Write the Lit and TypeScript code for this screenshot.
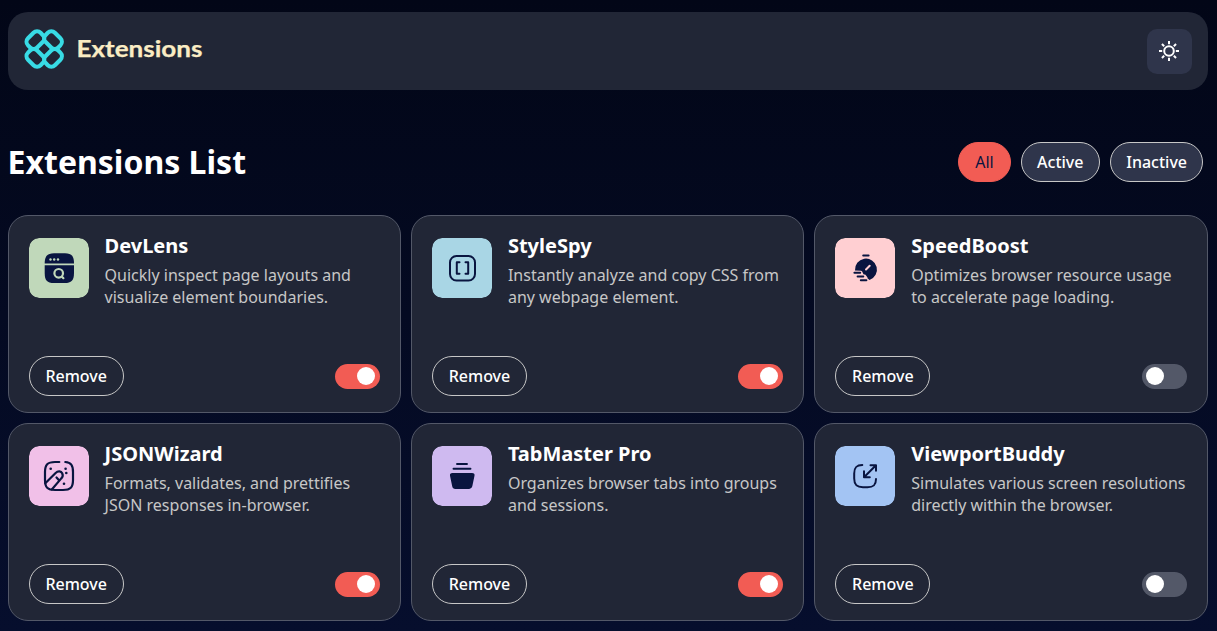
import { LitElement, html, css, svg } from "lit";
import { customElement, state } from "lit/decorators.js";
import { classMap } from "lit/directives/class-map.js";

const NAVY = "#091540";

const icons: Record<string, unknown> = {
  lens: svg`
    <path fill=${NAVY} d="M15.7 25.5C15.7 18 18.5 15.3 25 15.3H36C42.500 15.3 45 18 45 25.500Z"/>
    <path fill=${NAVY} d="M15.7 27.300H45V35C45 42.500 42.500 45 35.500 45H25C18 45 15.700 42.500 15.700 35Z"/>
    <g fill="#c0d8ba"><circle cx="21.500" cy="21.500" r="1.200"/><circle cx="25.200" cy="21.500" r="1.200"/><circle cx="29" cy="21.500" r="1.200"/></g>
    <g fill="none" stroke="#c0d8ba" stroke-width="2.200" stroke-linecap="round"><circle cx="29.700" cy="35.300" r="4.300"/><path d="M33 38.700L34.400 40.200"/></g>`,
  brackets: svg`<g fill="none" stroke=${NAVY} stroke-width="2" stroke-linecap="round" stroke-linejoin="round">
    <rect x="18" y="18" width="25" height="24.500" rx="6.500"/>
    <path d="M27.500 24.200H24.800V35.800H27.500M33.500 24.200H36.200V35.800H33.500"/></g>`,
  speed: svg`
    <path fill=${NAVY} d="M20 32.500A11 11 0 1 1 34.500 42L32.500 40.300V39.500L30.500 36.800L28.500 36.300L27 33.200L26 32.700Z"/>
    <g fill="none" stroke-linecap="round"><path stroke=${NAVY} stroke-width="2" d="M28.200 17.400H33.600M19.400 34.800H25.200M22.600 38.500H28.300M25.800 42.300H31.400"/>
    <path stroke="#ffcfd2" stroke-width="2" d="M31 31.500L34.700 27.700"/></g>`,
  wizard: svg`<g fill="none" stroke=${NAVY} stroke-width="2.200" stroke-linecap="round" stroke-linejoin="round">
    <path d="M30.300 16H26C18.500 16 16 18.500 16 26V34C16 41.500 18.500 44 26 44H34C41.500 44 44 41.500 44 34V26C44 19 42 16.500 36.300 16"/>
    <path d="M16.300 37.300L26.600 27C29.200 24.400 32.200 25.300 33.200 27.200C34.100 29 33.900 30.800 32.300 32.400L22.800 43.500M27.500 31.500L29.600 33.800"/></g>
    <g fill=${NAVY}><circle cx="21.700" cy="22.700" r="1.300"/><circle cx="36.600" cy="22.700" r="1.300"/><circle cx="37.300" cy="27" r="1.300"/><circle cx="35" cy="37.700" r="1.300"/></g>`,
  tabs: svg`<path stroke=${NAVY} stroke-width="1.900" stroke-linecap="round" d="M25 18H35M21.500 22.700H38.500"/>
    <path fill=${NAVY} d="M20.500 27H40Q43 27 42.500 29.700L40.300 40.300Q39.700 43 37.200 43H23.300Q20.700 43 20.200 40.300L18 29.700Q17.500 27 20.500 27Z"/>`,
  viewport: svg`<path fill="none" stroke=${NAVY} stroke-width="2" stroke-linecap="round" stroke-linejoin="round"
    d="M27.300 19C21.500 19 19.200 21.300 19.200 27.500V32.500C19.200 39 21.700 41.200 28 41.200H32.500C38.700 41.200 41 39 41 33M29 31.200L41 19.200M29 25.200V31.200H34.800M35.500 19.200H41V24.800"/>`,
};

interface Extension { name: string; text: string; icon: string; color: string; on: boolean }

@customElement("app-root")
export class AppRoot extends LitElement {
  @state() filter = "All";
  @state() items: Extension[] = [
    { name: "DevLens", text: "Quickly inspect page layouts and visualize element boundaries.", icon: "lens", color: "#c0d8ba", on: true },
    { name: "StyleSpy", text: "Instantly analyze and copy CSS from any webpage element.", icon: "brackets", color: "#a9d6e5", on: true },
    { name: "SpeedBoost", text: "Optimizes browser resource usage to accelerate page loading.", icon: "speed", color: "#ffcfd2", on: false },
    { name: "JSONWizard", text: "Formats, validates, and prettifies JSON responses in-browser.", icon: "wizard", color: "#f1c0e8", on: true },
    { name: "TabMaster Pro", text: "Organizes browser tabs into groups and sessions.", icon: "tabs", color: "#cfbaf0", on: true },
    { name: "ViewportBuddy", text: "Simulates various screen resolutions directly within the browser.", icon: "viewport", color: "#a3c4f3", on: false },
  ];

  static styles = css`
    :host { display: block; box-sizing: border-box; height: 631px; overflow: hidden; padding: 12px 9.400px 10px 7.600px;
      background: linear-gradient(180deg, #020617 0%, #060e2d 100%);
      font-family: "Noto Sans", sans-serif; font-size: 16px; color: #fff; }
    * { box-sizing: border-box; }
    .bar { display: flex; justify-content: space-between; align-items: center; height: 78px; padding: 0 16px 0 15px;
      background: #212636; border-radius: 20px; }
    .logo { display: block; margin-bottom: 5px; }
    .wordmark { font: 700 23.500px Lato, sans-serif; fill: #faecc4; stroke: #faecc4; stroke-width: 0.25px; }
    .theme { display: grid; place-items: center; width: 45px; height: 45px; padding: 0 1px 0 0; border: 0; border-radius: 10px; background: #2f354b; }
    .heading { display: flex; justify-content: space-between; align-items: center; height: 40px; margin: 52px 0 33px; padding-right: 4.200px; }
    h1 { margin: 0; font-size: 32px; line-height: 40px; font-weight: 700; }
    .filters { display: flex; gap: 10px; }
    .pill { height: 40px; padding: 0 15.400px; border: 1px solid #c7c7c7; border-radius: 20px; background: #2f354b; color: #fff;
      font: 500 16px/22px "Noto Sans", sans-serif; }
    .pill.current { padding: 0 16px; background: #f25c54; border-color: #f25c54; color: #091540; font-weight: 400; }
    .pill.plain { padding: 0 15.800px; background: transparent; }
    .grid { display: grid; grid-template-columns: repeat(3, 1fr); gap: 10px; }
    .card { display: flex; flex-direction: column; justify-content: space-between; height: 198px; padding: 16px 20px;
      border: 1px solid #535868; border-radius: 20px; background: #212636; }
    .info { display: flex; gap: 16px; }
    .tile { flex: none; width: 60px; height: 60px; margin-top: 6px; border-radius: 10px; }
    h2 { margin: 0; font-size: 20px; line-height: 27px; font-weight: 700; }
    p { margin: 5px 0 0; line-height: 22px; color: #c7c7c7; }
    .actions { display: flex; justify-content: space-between; align-items: center; }
    .switch { width: 45px; height: 25px; padding: 3.500px 4px; border: 0; border-radius: 13px; background: #535868; display: flex; align-items: center; }
    .switch.on { background: #f25c54; justify-content: flex-end; padding-right: 5px; }
    .knob { width: 18px; height: 18px; border-radius: 50%; background: #fff; }
  `;

  toggle(item: Extension) {
    this.items = this.items.map((i) => (i === item ? { ...i, on: !i.on } : i));
  }

  render() {
    const shown = this.items.filter((i) => this.filter === "All" || i.on === (this.filter === "Active"));
    return html`
      <header class="bar">
        <svg class="logo" width="190" height="42" viewBox="0 0 190 42">
          <g transform="translate(21.200 21)" fill="none" stroke="#38dbe5" stroke-width="4.100">
            ${[45, 135, 225, 315].map((a) => svg`<rect x="-8.900" y="-19" width="17.800" height="13" rx="5" transform="rotate(${a})"/>`)}
          </g>
          <text class="wordmark" x="53.500" y="29.200" textLength="126" lengthAdjust="spacingAndGlyphs">Extensions</text>
        </svg>
        <button class="theme" aria-label="Toggle theme">
          <svg width="22" height="22" viewBox="-11 -11 22 22" fill="none" stroke="#fff" stroke-width="2">
            <circle r="4.800"/>
            ${[0, 45, 90, 135, 180, 225, 270, 315].map((a) => svg`<path d="M0-6.800V-10" transform="rotate(${a})"/>`)}
          </svg>
        </button>
      </header>
      <section class="heading">
        <h1>Extensions List</h1>
        <div class="filters">
          ${["All", "Active", "Inactive"].map((f) => html`<button class=${classMap({ pill: true, current: f === this.filter })} @click=${() => (this.filter = f)}>${f}</button>`)}
        </div>
      </section>
      <main class="grid">
        ${shown.map((i) => html`<article class="card">
          <div class="info">
            <svg class="tile" viewBox="0 0 60 60"><rect width="60" height="60" rx="10" fill=${i.color}/>${icons[i.icon]}</svg>
            <div><h2>${i.name}</h2><p>${i.text}</p></div>
          </div>
          <div class="actions">
            <button class="pill plain" @click=${() => (this.items = this.items.filter((x) => x !== i))}>Remove</button>
            <button class=${classMap({ switch: true, on: i.on })} role="switch" aria-checked=${i.on} aria-label=${i.name} @click=${() => this.toggle(i)}><span class="knob"></span></button>
          </div>
        </article>`)}
      </main>`;
  }
}
